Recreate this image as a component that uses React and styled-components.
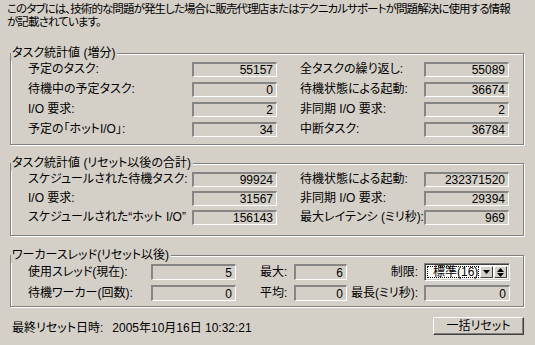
import React from "react";
import styled, { createGlobalStyle } from "styled-components";

const Global = createGlobalStyle`
  body {
    margin: 0;
    background: #d4d0c8;
    font-family: "Liberation Sans", "Noto Sans CJK JP", sans-serif;
    font-size: 12px;
    color: #000;
    font-feature-settings: "palt";
  }
`;

const Page = styled.div`
  width: 535px;
  height: 345px;
  box-sizing: border-box;
  padding: 3px 11px 0 0;
  display: flex;
  flex-direction: column;
`;

const Intro = styled.p`
  margin: 0 0 0 7px;
  font-size: 11.5px;
  line-height: 13px;
  letter-spacing: -0.9px;
  white-space: nowrap;
`;

const Group = styled.div`
  position: relative;
  margin: ${p => p.top}px 0 0 10px;
  border: 1px solid #808080;
  box-shadow: inset 1px 1px #fff, 1px 1px #fff;
  padding: 8px 0 ${p => p.bottom}px 17px;
`;

// title sits over the etched border line
const Title = styled.span`
  position: absolute;
  top: -8px;
  left: 0;
  padding: 0 2px 0 1px;
  background: #d4d0c8;
  line-height: 15px;
  white-space: nowrap;
`;

const Grid = styled.div`
  display: grid;
  grid-template-columns: ${p => p.cols};
  grid-auto-rows: ${p => p.rowH}px;
  row-gap: ${p => p.gap}px;
  align-items: center;
`;

const Label = styled.span`
  white-space: nowrap;
  line-height: 15px;
  text-align: ${p => (p.right ? "right" : "left")};
  padding-right: ${p => (p.right ? 6 : 0)}px;
`;

const Field = styled.div`
  box-sizing: border-box;
  height: 100%;
  border-top: 2px solid #858585;
  border-left: 2px solid #858585;
  border-bottom: 1px solid #fff;
  border-right: 1px solid #fff;
  display: flex;
  align-items: center;
  justify-content: flex-end;
  padding-right: 3px;
  line-height: 12px;
`;

const Combo = styled.div`
  box-sizing: border-box;
  height: 18px;
  width: 86px;
  background: #fff;
  border-top: 1px solid #808080;
  border-left: 1px solid #808080;
  border-bottom: 1px solid #fff;
  border-right: 1px solid #fff;
  box-shadow: inset 1px 1px #404040, inset -1px -1px #d4d0c8;
  display: flex;
  padding: 2px;
  gap: 1px;
`;

const ComboValue = styled.div`
  flex: 1;
  outline: 1px dotted #000;
  outline-offset: -1px;
  display: flex;
  align-items: center;
  padding-left: 6px;
  line-height: 12px;
  white-space: nowrap;
`;

const ArrowBtn = styled.div`
  width: 13px;
  box-sizing: border-box;
  background: #d4d0c8;
  border-top: 1px solid #fff;
  border-left: 1px solid #fff;
  border-bottom: 1px solid #404040;
  border-right: 1px solid #404040;
  display: flex;
  flex-direction: column;
  align-items: center;
  justify-content: center;
  gap: 1px;
`;

const Footer = styled.div`
  margin: 10px 0 0 12px;
  display: flex;
  align-items: center;
  justify-content: space-between;
`;

const Stamp = styled.span`
  display: flex;
  gap: 9px;
  white-space: nowrap;
`;

const Button = styled.button`
  width: 91px;
  height: 18px;
  padding: 0;
  font: inherit;
  background: #d4d0c8;
  border-top: 1px solid #fff;
  border-left: 1px solid #fff;
  border-bottom: 1px solid #404040;
  border-right: 1px solid #404040;
  box-shadow: inset -1px -1px #808080;
  line-height: 14px;
`;

const Down = () => (
  <svg width="7" height="4" viewBox="0 0 7 4"><path d="M0 0h7L3.5 4z" fill="#000" /></svg>
);
const Up = () => (
  <svg width="7" height="4" viewBox="0 0 7 4"><path d="M0 4h7L3.5 0z" fill="#000" /></svg>
);

const wide = "164px 85px 23px 124px 85px";

const incStats = [
  ["予定のタスク:", "55157", "全タスクの繰り返し:", "55089"],
  ["待機中の予定タスク:", "0", "待機状態による起動:", "36674"],
  ["I/O 要求:", "2", "非同期 I/O 要求:", "2"],
  ["予定の「ホットI/O」:", "34", "中断タスク:", "36784"],
];

const totalStats = [
  ["スケジュールされた待機タスク:", "99924", "待機状態による起動:", "232371520"],
  ["I/O 要求:", "31567", "非同期 I/O 要求:", "29394"],
  ["スケジュールされた“ホット I/O”", "156143", "最大レイテンシ (ミリ秒):", "969"],
];

const StatRows = ({ rows }) =>
  rows.map(([l1, v1, l2, v2]) => (
    <React.Fragment key={l1 + l2}>
      <Label>{l1}</Label>
      <Field>{v1}</Field>
      <span />
      <Label>{l2}</Label>
      <Field>{v2}</Field>
    </React.Fragment>
  ));

export default function App() {
  return (
    <Page>
      <Global />
      <Intro>
        このタブには、技術的な問題が発生した場合に販売代理店またはテクニカルサポートが問題解決に使用する情報
        <br />
        が記載されています。
      </Intro>

      <Group top={24} bottom={7}>
        <Title>タスク統計値 (増分)</Title>
        <Grid cols={wide} rowH={15} gap={5}>
          <StatRows rows={incStats} />
        </Grid>
      </Group>

      <Group top={18} bottom={10}>
        <Title>タスク統計値 (リセット以後の合計)</Title>
        <Grid cols={wide} rowH={15} gap={4}>
          <StatRows rows={totalStats} />
        </Grid>
      </Group>

      <Group top={19} bottom={5}>
        <Title>ワーカースレッド(リセット以後)</Title>
        <Grid cols="123px 85px 24px 34px 53px 77px 86px" rowH={16} gap={5}>
          <Label>使用スレッド(現在):</Label>
          <Field>5</Field>
          <span />
          <Label>最大:</Label>
          <Field>6</Field>
          <Label right>制限:</Label>
          <Combo>
            <ComboValue>標準(16)</ComboValue>
            <ArrowBtn><Down /></ArrowBtn>
            <ArrowBtn><Up /><Down /></ArrowBtn>
          </Combo>

          <Label>待機ワーカー(回数):</Label>
          <Field>0</Field>
          <span />
          <Label>平均:</Label>
          <Field>0</Field>
          <Label right>最長(ミリ秒):</Label>
          <Field>0</Field>
        </Grid>
      </Group>

      <Footer>
        <Stamp>
          <span>最終リセット日時:</span>
          <span>2005年10月16日 10:32:21</span>
        </Stamp>
        <Button>一括リセット</Button>
      </Footer>
    </Page>
  );
}
